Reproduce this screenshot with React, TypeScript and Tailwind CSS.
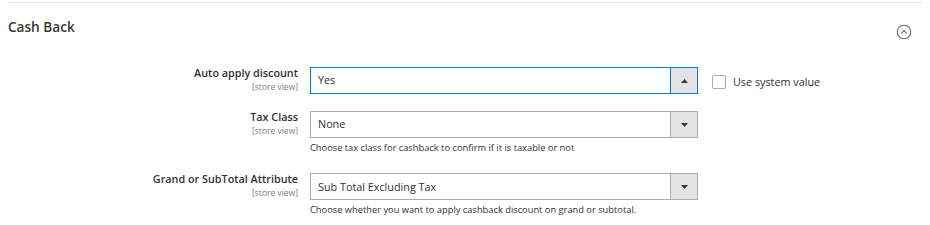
import React from 'react';

type Row = {
  label: string;
  value: string;
  note?: string;
  focused?: boolean;
  systemValue?: boolean;
};

const rows: Row[] = [
  { label: 'Auto apply discount', value: 'Yes', focused: true, systemValue: true },
  {
    label: 'Tax Class',
    value: 'None',
    note: 'Choose tax class for cashback to confirm if it is taxable or not',
  },
  {
    label: 'Grand or SubTotal Attribute',
    value: 'Sub Total Excluding Tax',
    note: 'Choose whether you want to apply cashback discount on grand or subtotal.',
  },
];

const Arrow: React.FC<{ up?: boolean }> = ({ up }) => (
  <svg width="7" height="4" viewBox="0 0 7 4" className="block">
    {up ? <path d="M0 4 L3.5 0 L7 4 Z" fill="#41362f" /> : <path d="M0 0 L3.5 4 L7 0 Z" fill="#41362f" />}
  </svg>
);

const Select: React.FC<{ value: string; focused?: boolean }> = ({ value, focused }) => (
  <div
    className={`flex h-[27px] w-[388px] border bg-white ${
      focused ? 'border-[#007bdb]' : 'border-[#adadad]'
    }`}
  >
    <div className="flex flex-1 items-center pl-[7px] text-[10.8px] text-[#303030]">{value}</div>
    <div
      className={`flex w-[27px] items-center justify-center border-l bg-[#e3e3e3] ${
        focused ? 'border-[#007bdb]' : 'border-[#adadad]'
      }`}
    >
      <Arrow up={focused} />
    </div>
  </div>
);

export default function App() {
  return (
    <div className="w-[930px] bg-white pt-[2px] font-['Open_Sans',sans-serif] text-[#303030]">
      <div className="mx-2 border-t border-[#e3e3e3]">
        {/* Section header */}
        <div className="flex h-[47px] items-start justify-between">
          <h2 className="mt-[14px] text-[13.6px] font-semibold text-[#41362f]">Cash Back</h2>
          <svg width="16" height="16" viewBox="0 0 16 16" className="mr-[10px] mt-[21px]">
            <circle cx="8" cy="8" r="6.8" fill="none" stroke="#6f6f6f" strokeWidth="1.1" />
            <path d="M5.3 9.3 L8 6.6 L10.7 9.3" fill="none" stroke="#6f6f6f" strokeWidth="1.2" />
          </svg>
        </div>

        {/* Fields */}
        <div className="mt-[17px] flex flex-col">
          {rows.map((row, i) => (
            <div key={row.label} className={`flex items-start gap-3 ${i === 0 ? 'mb-[17px]' : 'mb-[21px]'}`}>
              <div className="flex w-[290px] flex-col items-end pt-[1px] leading-none">
                <span className="text-[10.8px] font-semibold text-[#303030]">{row.label}</span>
                <span className="mt-[4px] text-[8.5px] text-[#808080]">[store view]</span>
              </div>
              <div className="flex flex-col">
                <Select value={row.value} focused={row.focused} />
                {row.note && <p className="mt-[5px] text-[9.3px] leading-none text-[#303030]">{row.note}</p>}
              </div>
              {row.systemValue && (
                <label className="ml-[2px] mt-[7px] flex items-center gap-[7px] text-[10.8px] text-[#303030]">
                  <span className="h-[14px] w-[14px] rounded-[2px] border border-[#adadad] bg-white" />
                  Use system value
                </label>
              )}
            </div>
          ))}
        </div>
      </div>
    </div>
  );
}
